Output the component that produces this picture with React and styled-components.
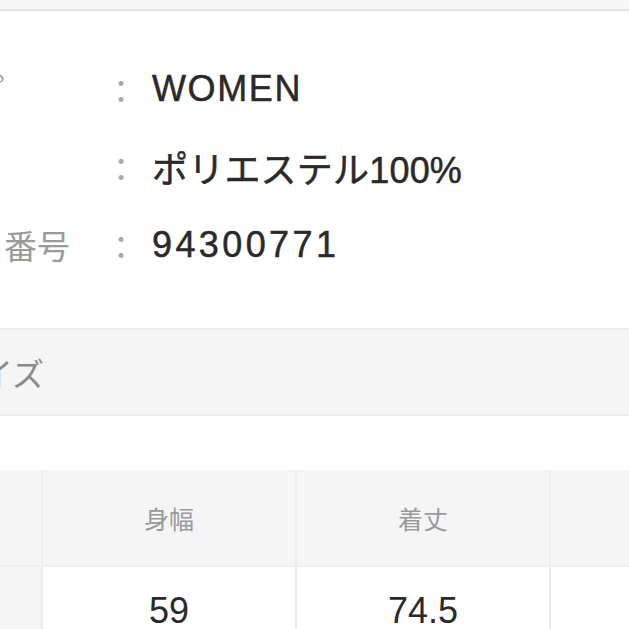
import React from "react";
import styled, { createGlobalStyle } from "styled-components";

const GlobalStyle = createGlobalStyle`
  html, body {
    margin: 0;
    padding: 0;
    overflow: hidden;
    background: #ffffff;
  }
  body {
    font-family: "Liberation Sans", "Noto Sans CJK JP", sans-serif;
    color: #2b2b2b;
  }
`;

const specs = [
  { label: "タイプ", value: "WOMEN", spacing: 1.6 },
  { label: "素材", value: "ポリエステル100%", spacing: 0.2 },
  { label: "ロット番号", value: "94300771", spacing: 3.4 },
];

const sizeHeads = ["", "身幅", "着丈", "袖丈"];
const sizeRows = [["M", "59", "74.5", "58"]];

export default function App() {
  return (
    <>
      <GlobalStyle />
      <TopBar />
      <Page>
        <SpecList>
          {specs.map((s) => (
            <SpecRow key={s.label}>
              <Label>{s.label}</Label>
              <Colon>：</Colon>
              <Value $spacing={s.spacing}>{s.value}</Value>
            </SpecRow>
          ))}
        </SpecList>

        <SectionBand>サイズ</SectionBand>

        <SizeTable>
          <colgroup>
            <col style={{ width: 136 }} />
            <col style={{ width: 254 }} />
            <col style={{ width: 254 }} />
            <col style={{ width: 254 }} />
          </colgroup>
          <thead>
            <tr>
              {sizeHeads.map((h, i) => (
                <HeadCell key={i}>{h}</HeadCell>
              ))}
            </tr>
          </thead>
          <tbody>
            {sizeRows.map((row) => (
              <tr key={row[0]}>
                {row.map((v, i) => (
                  <BodyCell key={i} $first={i === 0}>
                    {v}
                  </BodyCell>
                ))}
              </tr>
            ))}
          </tbody>
        </SizeTable>
      </Page>
    </>
  );
}

const TopBar = styled.div`
  height: 9px;
  background: #f6f6f6;
  border-bottom: 2px solid #e6e6e6;
  box-shadow: 0 1px 2px rgba(0, 0, 0, 0.03);
`;

const Page = styled.div`
  margin-left: -95px;
`;

const SpecList = styled.div`
  display: flex;
  flex-direction: column;
  padding: 39px 0 44px;
`;

const SpecRow = styled.div`
  display: flex;
  align-items: center;
  height: 78px;
`;

const Label = styled.div`
  width: 198px;
  font-size: 33px;
  color: #9a9a9a;
  white-space: nowrap;
`;

const Colon = styled.div`
  width: 36px;
  font-family: "Noto Sans CJK JP", sans-serif;
  font-size: 32px;
  text-align: center;
  color: #a8a8a8;
`;

const Value = styled.div`
  margin-left: 13px;
  font-size: 36px;
  color: #2a2a2a;
  -webkit-text-stroke: 0.5px #2a2a2a;
  letter-spacing: ${(p) => p.$spacing}px;
  white-space: nowrap;
`;

const SectionBand = styled.div`
  display: flex;
  align-items: center;
  height: 84px;
  padding-left: 44px;
  background: #f5f5f5;
  border-top: 2px solid #ebebeb;
  border-bottom: 2px solid #ebebeb;
  font-size: 32px;
  color: #8a8a8a;
  margin-bottom: 54px;
`;

const SizeTable = styled.table`
  table-layout: fixed;
  width: 898px;
  border-collapse: collapse;
`;

const HeadCell = styled.th`
  height: 95px;
  padding: 0;
  background: #f5f5f5;
  border: 2px solid #efefef;
  border-top: none;
  font-size: 25px;
  font-weight: 400;
  color: #9a9a9a;
  text-align: center;
`;

const BodyCell = styled.td`
  height: 88px;
  padding: 0;
  background: ${(p) => (p.$first ? "#f5f5f5" : "#ffffff")};
  border: 2px solid #ececec;
  font-size: 36px;
  color: ${(p) => (p.$first ? "#9a9a9a" : "#2a2a2a")};
  text-align: center;
`;
